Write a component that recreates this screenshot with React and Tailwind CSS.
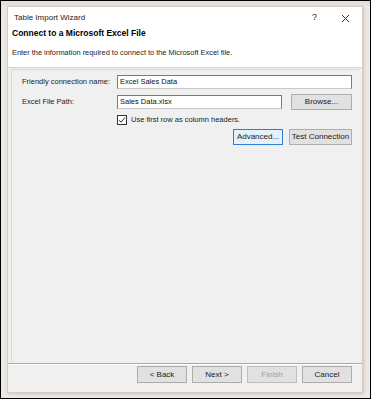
import React from 'react'

const Btn = ({ children, w = 'w-[50px]', h = 'h-[16px]', active, disabled }) => (
  <div
    className={`${w} ${h} flex items-center justify-center text-[8px] ${
      active ? 'border border-[#2f7fd6] bg-[#e5f1fb]' : 'border border-[#adadad] bg-[#e1e1e1]'
    } ${disabled ? 'text-[#a0a0a0] bg-[#cccccc] border-[#bfbfbf]' : 'text-[#1a1a1a]'}`}
  >
    {children}
  </div>
)

export default function App() {
  return (
    <div
      className="w-[371px] h-[399px] border border-black bg-[#ece8e4] flex flex-col overflow-hidden"
      style={{ fontFamily: '"Liberation Sans", Arial, sans-serif' }}
    >
      <div className="h-[5px] shrink-0 bg-[#e4e0dc]" />
      <div className="ml-[6px] w-[356px] h-[387px] border border-[#d8ccc4] bg-[#f0f0f0] flex flex-col shadow-[1px_1px_3px_rgba(0,0,0,0.15)]">
        {/* header */}
        <div className="bg-white h-[61px] border-b border-[#d4d4d4] flex flex-col px-[4px]">
          <div className="flex items-center h-[22px] pl-[2px]">
            <span className="text-[8px] text-[#222]">Table Import Wizard</span>
            <span className="ml-auto text-[9px] text-[#222] mr-[24px]">?</span>
            <svg width="9" height="9" viewBox="0 0 9 9" className="mr-[8px]">
              <path d="M1 1L8 8M8 1L1 8" stroke="#333" strokeWidth="1" />
            </svg>
          </div>
          <div className="text-[8.5px] font-bold text-black leading-none">
            Connect to a Microsoft Excel File
          </div>
          <div className="text-[7.4px] text-[#222] mt-[11px] leading-none">
            Enter the information required to connect to the Microsoft Excel file.
          </div>
        </div>

        {/* form */}
        <div className="flex-1 mx-[3px] mt-[1px] border-l border-t border-[#d8d8d8] flex flex-col pl-[10px] pr-[7px] pt-[5px]">
          <div className="flex items-center h-[14px]">
            <span className="w-[95px] text-[7.5px] text-[#222]">Friendly connection name:</span>
            <div className="flex-1 h-[14px] bg-white border border-[#7a7a7a] border-b-[#c8c8c8] flex items-center px-[2px] text-[7.5px] text-[#111]">
              Excel Sales Data
            </div>
          </div>
          <div className="flex items-center mt-[5px] h-[16px]">
            <span className="w-[95px] text-[7.5px] text-[#222]">Excel File Path:</span>
            <div className="w-[165px] h-[14px] bg-white border border-[#7a7a7a] border-b-[#c8c8c8] flex items-center px-[2px] text-[7.5px] text-[#111]">
              Sales Data.xlsx
            </div>
            <div className="ml-auto">
              <Btn w="w-[61px]">Browse...</Btn>
            </div>
          </div>
          <div className="flex items-center mt-[4px] ml-[95px] h-[11px]">
            <div className="w-[10px] h-[10px] bg-white border border-[#333] flex items-center justify-center">
              <svg width="8" height="8" viewBox="0 0 8 8">
                <path d="M1 4.2L3 6.2L7 1.5" stroke="#222" strokeWidth="1" fill="none" />
              </svg>
            </div>
            <span className="ml-[4px] text-[7.5px] text-[#222]">Use first row as column headers.</span>
          </div>
          <div className="flex justify-end gap-[6px] mt-[4px]">
            <Btn w="w-[50px]" active>Advanced...</Btn>
            <Btn w="w-[63px]">Test Connection</Btn>
          </div>
        </div>

        {/* footer */}
        <div className="h-[29px] border-t border-[#a8a8a8] shadow-[inset_0_1px_0_#ffffff] flex items-start justify-end gap-[5px] pt-[2px] pr-[10px]">
          <Btn h="h-[17px]">&lt; Back</Btn>
          <Btn h="h-[17px]">Next &gt;</Btn>
          <Btn h="h-[17px]" disabled>Finish</Btn>
          <Btn h="h-[17px]">Cancel</Btn>
        </div>
      </div>
    </div>
  )
}
